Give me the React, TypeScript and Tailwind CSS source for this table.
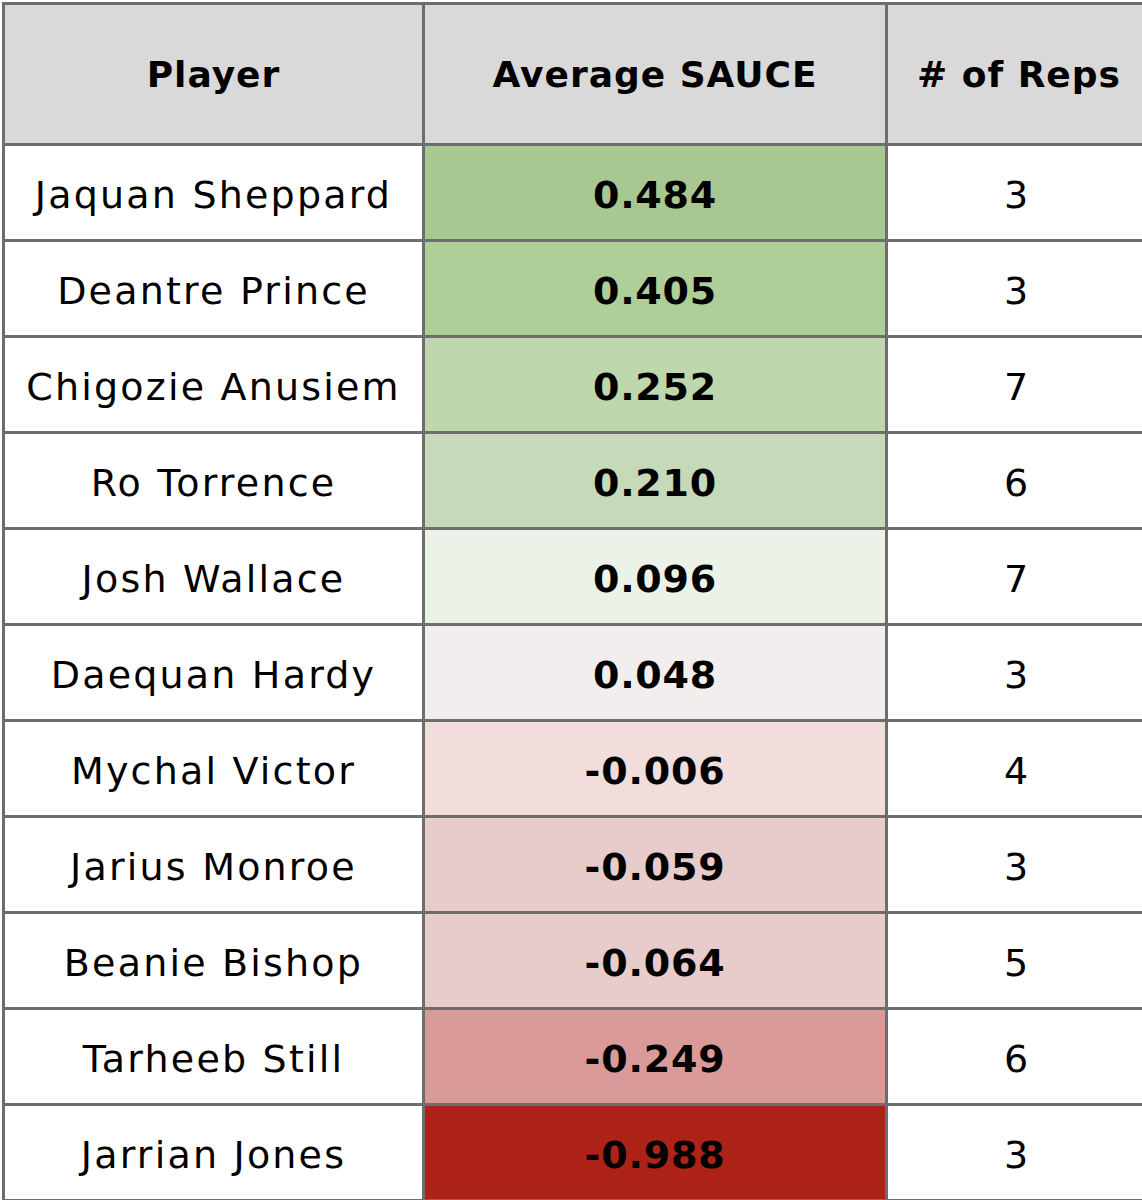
const rows = [
  { name: "Jaquan Sheppard", sauce: "0.484", reps: 3, bg: "bg-[#a9c891]" },
  { name: "Deantre Prince", sauce: "0.405", reps: 3, bg: "bg-[#b0cf98]" },
  { name: "Chigozie Anusiem", sauce: "0.252", reps: 7, bg: "bg-[#bfd7ad]" },
  { name: "Ro Torrence", sauce: "0.210", reps: 6, bg: "bg-[#c6dab9]" },
  { name: "Josh Wallace", sauce: "0.096", reps: 7, bg: "bg-[#ebf3e8]" },
  { name: "Daequan Hardy", sauce: "0.048", reps: 3, bg: "bg-[#f3eeee]" },
  { name: "Mychal Victor", sauce: "-0.006", reps: 4, bg: "bg-[#f1dddc]" },
  { name: "Jarius Monroe", sauce: "-0.059", reps: 3, bg: "bg-[#e8cbcb]" },
  { name: "Beanie Bishop", sauce: "-0.064", reps: 5, bg: "bg-[#e8cbcb]" },
  { name: "Tarheeb Still", sauce: "-0.249", reps: 6, bg: "bg-[#d99a99]" },
  { name: "Jarrian Jones", sauce: "-0.988", reps: 3, bg: "bg-[#ad2318]" },
];

const cell = "flex items-center justify-center text-black";
const head = "bg-[#d9d9d9] text-[36px] font-bold tracking-[1px] pt-[2px]";

export default function App() {
  return (
    <div
      className="w-[1142px] h-[1200px] overflow-hidden bg-white"
      style={{ fontFamily: '"DejaVu Sans", "Noto Sans", sans-serif' }}
    >
      <div className="ml-[2px] mt-[2px] w-[1160px] grid grid-cols-[417px_460px_1fr] grid-rows-[138px] auto-rows-[93px] gap-[3px] p-[3px] bg-[#6d6d6d]">
        <div className={`${cell} ${head}`}>Player</div>
        <div className={`${cell} ${head}`}>Average SAUCE</div>
        <div className={`${cell} ${head} justify-start pl-[29px]`}># of Reps</div>

        {rows.map((row) => (
          <div key={row.name} className="contents">
            <div className={`${cell} bg-white text-[38px] tracking-[2.2px] pt-[5px]`}>{row.name}</div>
            <div className={`${cell} ${row.bg} text-[38px] font-bold tracking-[0.8px] pt-[5px]`}>
              {row.sauce}
            </div>
            <div className={`${cell} bg-white text-[38px] justify-start pl-[116px] pt-[5px]`}>
              {row.reps}
            </div>
          </div>
        ))}
      </div>
    </div>
  );
}
